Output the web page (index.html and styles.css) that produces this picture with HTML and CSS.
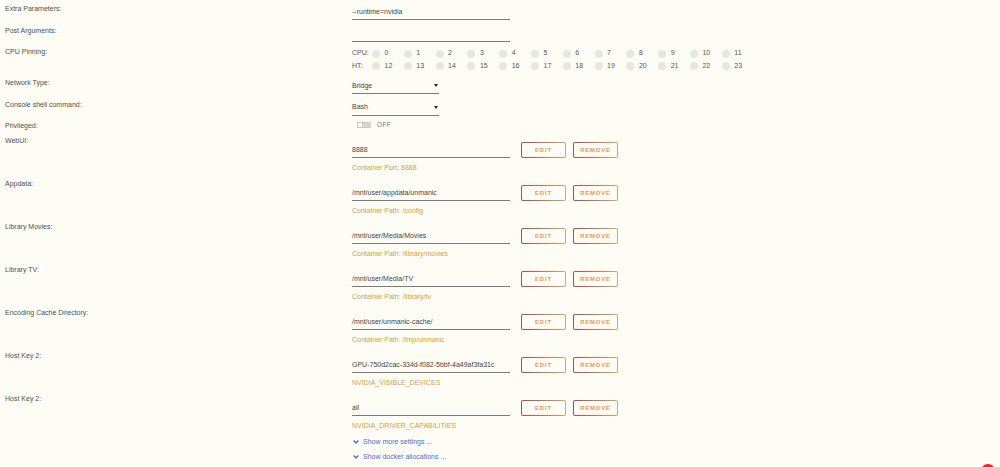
FILE: index.html
```html
<!DOCTYPE html>
<html>
<head>
<meta charset="utf-8">
<link rel="stylesheet" href="styles.css">
</head>
<body>
<div class="form">
  <div class="row row-text">
    <div class="label">Extra Parameters:</div>
    <div class="field"><div class="input">--runtime=nvidia</div></div>
  </div>
  <div class="row row-text">
    <div class="label">Post Arguments:</div>
    <div class="field"><div class="input"></div></div>
  </div>
  <div class="row row-cpu">
    <div class="label">CPU Pinning:</div>
    <div class="field cpu">
      <div class="cpu-line">
        <span class="cpu-head">CPU:</span>
        <span class="core"><i></i>0</span><span class="core"><i></i>1</span><span class="core"><i></i>2</span><span class="core"><i></i>3</span><span class="core"><i></i>4</span><span class="core"><i></i>5</span><span class="core"><i></i>6</span><span class="core"><i></i>7</span><span class="core"><i></i>8</span><span class="core"><i></i>9</span><span class="core"><i></i>10</span><span class="core"><i></i>11</span>
      </div>
      <div class="cpu-line">
        <span class="cpu-head">HT:</span>
        <span class="core"><i></i>12</span><span class="core"><i></i>13</span><span class="core"><i></i>14</span><span class="core"><i></i>15</span><span class="core"><i></i>16</span><span class="core"><i></i>17</span><span class="core"><i></i>18</span><span class="core"><i></i>19</span><span class="core"><i></i>20</span><span class="core"><i></i>21</span><span class="core"><i></i>22</span><span class="core"><i></i>23</span>
      </div>
    </div>
  </div>
  <div class="row row-select">
    <div class="label">Network Type:</div>
    <div class="field"><div class="select"><span>Bridge</span><svg width="4" height="3" viewBox="0 0 4 3"><path d="M0 0h4L2 3z" fill="#222"/></svg></div></div>
  </div>
  <div class="row row-select">
    <div class="label">Console shell command:</div>
    <div class="field"><div class="select"><span>Bash</span><svg width="4" height="3" viewBox="0 0 4 3"><path d="M0 0h4L2 3z" fill="#222"/></svg></div></div>
  </div>
  <div class="row row-toggle">
    <div class="label">Privileged:</div>
    <div class="field toggle-field"><span class="toggle"><span class="knob"></span></span><span class="off">OFF</span></div>
  </div>

  <div class="row row-path">
    <div class="label">WebUI:</div>
    <div class="field">
      <div class="path-line"><div class="input path">8888</div><span class="btn">EDIT</span><span class="btn">REMOVE</span></div>
      <div class="desc">Container Port: 8888</div>
    </div>
  </div>
  <div class="row row-path">
    <div class="label">Appdata:</div>
    <div class="field">
      <div class="path-line"><div class="input path">/mnt/user/appdata/unmanic</div><span class="btn">EDIT</span><span class="btn">REMOVE</span></div>
      <div class="desc">Container Path: /config</div>
    </div>
  </div>
  <div class="row row-path">
    <div class="label">Library Movies:</div>
    <div class="field">
      <div class="path-line"><div class="input path">/mnt/user/Media/Movies</div><span class="btn">EDIT</span><span class="btn">REMOVE</span></div>
      <div class="desc">Container Path: /library/movies</div>
    </div>
  </div>
  <div class="row row-path">
    <div class="label">Library TV:</div>
    <div class="field">
      <div class="path-line"><div class="input path">/mnt/user/Media/TV</div><span class="btn">EDIT</span><span class="btn">REMOVE</span></div>
      <div class="desc">Container Path: /library/tv</div>
    </div>
  </div>
  <div class="row row-path">
    <div class="label">Encoding Cache Directory:</div>
    <div class="field">
      <div class="path-line"><div class="input path">/mnt/user/unmanic-cache/</div><span class="btn">EDIT</span><span class="btn">REMOVE</span></div>
      <div class="desc">Container Path: /tmp/unmanic</div>
    </div>
  </div>
  <div class="row row-path">
    <div class="label">Host Key 2:</div>
    <div class="field">
      <div class="path-line"><div class="input path">GPU-750d2cac-334d-f082-5bbf-4a49af3fa31c</div><span class="btn">EDIT</span><span class="btn">REMOVE</span></div>
      <div class="desc">NVIDIA_VISIBLE_DEVICES</div>
    </div>
  </div>
  <div class="row row-path last">
    <div class="label">Host Key 2:</div>
    <div class="field">
      <div class="path-line"><div class="input path">all</div><span class="btn">EDIT</span><span class="btn">REMOVE</span></div>
      <div class="desc">NVIDIA_DRIVER_CAPABILITIES</div>
    </div>
  </div>

  <div class="row row-links">
    <div></div>
    <div class="field">
      <div class="link"><svg width="6" height="4" viewBox="0 0 6 4"><path d="M0.6 0.6L3 3 5.4 0.6" fill="none" stroke="#4a6fc7" stroke-width="1.4"/></svg>Show more settings ...</div>
      <div class="link"><svg width="6" height="4" viewBox="0 0 6 4"><path d="M0.6 0.6L3 3 5.4 0.6" fill="none" stroke="#4a6fc7" stroke-width="1.4"/></svg>Show docker allocations ...</div>
    </div>
  </div>
</div>
<div class="help-dot"></div>
</body>
</html>
```

FILE: styles.css
```css
html, body {
  margin: 0;
  padding: 0;
  background: #fdfdf6;
}
body {
  font-family: "Liberation Sans", Arial, sans-serif;
  font-size: 7px;
  color: #555;
  overflow: hidden;
  height: 467px;
}
.form {
  padding-top: 4px;
}
.row {
  display: grid;
  grid-template-columns: 352px 1fr;
}
.label {
  padding-left: 5px;
  line-height: 10px;
  color: #4f4f4f;
}
.field {
  min-width: 0;
}
.row-text { height: 21.7px; }
.row-cpu { height: 31px; }
.row-select { height: 21.3px; }
.row-toggle { height: 14.8px; }
.row-path { height: 43px; }
.row-path.last { height: 40.5px; }

.input {
  width: 158px;
  height: 16px;
  box-sizing: border-box;
  padding-top: 2.5px;
  line-height: 10px;
  border-bottom: 1px solid #7a7a7a;
  color: #444;
  white-space: nowrap;
}

.cpu-line {
  display: flex;
  align-items: center;
  height: 12.3px;
  line-height: 12.3px;
  color: #555;
}
.cpu-head {
  width: 20px;
}
.core {
  display: flex;
  align-items: center;
  width: 31.8px;
}
.core i {
  display: block;
  width: 8px;
  height: 8px;
  border-radius: 50%;
  background: #e5e8e1;
  margin-right: 4.5px;
}

.select {
  width: 87px;
  height: 16px;
  box-sizing: border-box;
  padding-top: 2.5px;
  line-height: 10px;
  border-bottom: 1px solid #7a7a7a;
  color: #444;
  display: flex;
  justify-content: space-between;
}
.select svg {
  margin-top: 3.5px;
  margin-right: 1px;
}

.toggle-field {
  display: flex;
  align-items: center;
  height: 8px;
  padding-left: 5px;
}
.toggle {
  display: block;
  width: 14px;
  height: 6px;
  box-sizing: border-box;
  border: 1px solid #c9c9c4;
  border-radius: 1px;
  background: #d6d6d2;
  position: relative;
}
.knob {
  position: absolute;
  left: -1px;
  top: -1px;
  width: 6px;
  height: 6px;
  background: #fff;
  border: 1px solid #c9c9c4;
  box-sizing: border-box;
}
.off {
  margin-left: 6px;
  letter-spacing: 0.4px;
  color: #777;
  font-size: 6.5px;
}

.row-path .field {
  padding-top: 6.5px;
}
.path-line {
  display: flex;
  align-items: flex-start;
}
.input.path {
  margin-right: 11px;
}
.btn {
  width: 45px;
  height: 16px;
  box-sizing: border-box;
  border: 1px solid transparent;
  border-radius: 2px;
  background:
    linear-gradient(#fdfdf6, #fdfdf6) padding-box,
    linear-gradient(90deg, #bf3f50, #dca45e) border-box;
  color: #eb9350;
  font-weight: bold;
  font-size: 5.8px;
  letter-spacing: 0.9px;
  display: flex;
  align-items: center;
  justify-content: center;
  margin-right: 7px;
}
.desc {
  margin-top: 5px;
  line-height: 10px;
  color: #d39e3a;
}

.link {
  display: flex;
  align-items: center;
  height: 15px;
  color: #4a6fc7;
  padding-left: 1px;
}
.link svg {
  margin-right: 4px;
}

.help-dot {
  position: fixed;
  left: 981px;
  top: 464px;
  width: 14px;
  height: 14px;
  border-radius: 50%;
  background: #e3262b;
}
```
